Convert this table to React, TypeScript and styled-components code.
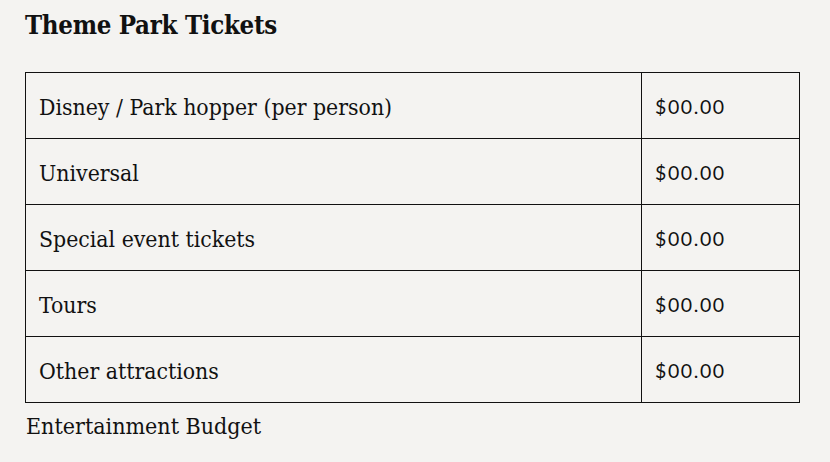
import React from "react";
import styled, { createGlobalStyle } from "styled-components";

const Global = createGlobalStyle`
  html, body { margin: 0; padding: 0; background: #f4f3f1; }
  body { font-family: "DejaVu Serif", "Liberation Serif", serif; color: #111; }
`;

const Page = styled.main`
  padding: 8px 31px 0 25px;
  width: 830px;
  box-sizing: border-box;
`;

const Title = styled.h2`
  margin: 0 0 30px 0;
  font-family: "DejaVu Serif Condensed", "DejaVu Serif", serif;
  font-stretch: condensed;
  font-weight: 700;
  font-size: 25.6px;
  line-height: 34px;
  letter-spacing: -0.3px;
`;

const Table = styled.table`
  width: 775px;
  border-collapse: collapse;
`;

const Caption = styled.caption`
  caption-side: bottom;
  text-align: left;
  padding: 8px 0 0 1px;
  font-family: "DejaVu Serif Condensed", "DejaVu Serif", serif;
  font-stretch: condensed;
  font-size: 23px;
  line-height: 30px;
`;

const Row = styled.tr`
  height: 66px;
`;

const Cell = styled.td<{ $money?: boolean }>`
  border: 1px solid #111;
  padding: 2px 0 0 13px;
  vertical-align: middle;
  width: ${(p) => (p.$money ? "144px" : "auto")};
  font-family: ${(p) =>
    p.$money ? '"Lato", "Noto Sans", sans-serif' : '"DejaVu Serif Condensed", "DejaVu Serif", serif'};
  font-stretch: ${(p) => (p.$money ? "normal" : "condensed")};
  font-size: ${(p) => (p.$money ? "19.5px" : "22.8px")};
  letter-spacing: ${(p) => (p.$money ? "1.6px" : "0")};
`;

const rows = [
  "Disney / Park hopper (per person)",
  "Universal",
  "Special event tickets",
  "Tours",
  "Other attractions",
];

export default function App() {
  return (
    <>
      <Global />
      <Page>
        <Title>Theme Park Tickets</Title>
        <Table>
          <tbody>
            {rows.map((r) => (
              <Row key={r}>
                <Cell>{r}</Cell>
                <Cell $money>$00.00</Cell>
              </Row>
            ))}
          </tbody>
          <Caption>Entertainment Budget</Caption>
        </Table>
      </Page>
    </>
  );
}
